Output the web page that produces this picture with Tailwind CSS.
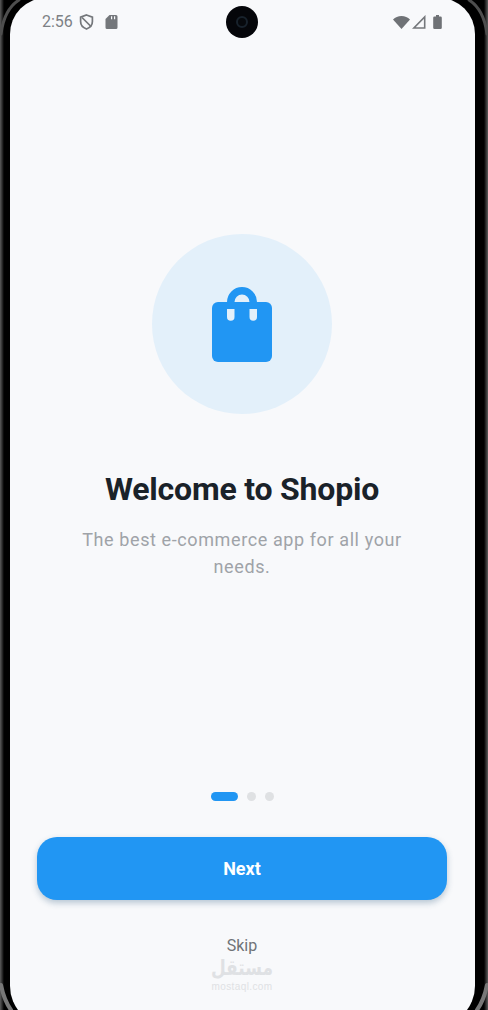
<!DOCTYPE html>
<html lang="en">
<head>
<meta charset="utf-8">
<title>Shopio</title>
<script src="https://cdn.jsdelivr.net/npm/@tailwindcss/browser@4"></script>
</head>
<body class="m-0 h-[1010px] w-[488px] overflow-hidden bg-black font-['Roboto',sans-serif]">
<div class="relative flex h-[1010px] w-[488px] overflow-hidden bg-[linear-gradient(to_right,#5c5c5c_0px,#303030_2px,#000_4px,#000_484px,#303030_486px,#5c5c5c_488px)] pl-[10px]">
  <svg class="absolute top-0 left-0" width="488" height="1010" viewBox="0 0 488 1010" fill="none" stroke-linecap="round">
    <path d="M1 34 C3 18 8 7 19 0" stroke="#4e4e4e" stroke-width="3"/>
    <path d="M487 34 C485 18 480 7 469 0" stroke="#4e4e4e" stroke-width="3"/>
    <path d="M1 985 C3 995 6 1003 11 1010" stroke="#777" stroke-width="4"/>
    <path d="M487 985 C485 995 482 1003 477 1010" stroke="#777" stroke-width="4"/>
  </svg>
  <main class="relative mt-[-2px] flex h-[1028px] w-[465px] shrink-0 flex-col items-center rounded-t-[36px] rounded-b-[40px] bg-[#f8f9fb] pr-[1px]">
    <header class="flex h-[48px] w-full items-center px-[32px]">
      <div class="flex flex-1 items-center text-[#7d8185]">
        <span class="text-[16px] leading-[20px]">2:56</span>
        <svg class="ml-[6px]" width="15" height="16" viewBox="0 0 15 16" fill="none" stroke="#74777b" stroke-width="1.7"><path d="M7.5 1 L13.4 3.1 V7.6 C13.4 11 11 13.8 7.5 15 C4 13.8 1.6 11 1.6 7.6 V3.1 Z"/><path d="M3 3.5 L12 12.5"/></svg>
        <svg class="ml-[11px]" width="13" height="14" viewBox="0 0 13 14" fill="#74777b"><path d="M4.5 0 H11 A1.5 1.5 0 0 1 12.5 1.5 V12.5 A1.5 1.5 0 0 1 11 14 H2 A1.5 1.5 0 0 1 .5 12.5 V4 Z"/><path d="M6 1.2h1.2v3H6zM9 1.2h1.2v3H9z" fill="#f8f9fb"/></svg>
      </div>
      <div class="flex size-[32px] shrink-0 items-center justify-center rounded-full bg-[#05060a]">
        <div class="size-[12px] rounded-full border-2 border-[#18222c] bg-[#06080c]"></div>
      </div>
      <div class="flex flex-1 items-center justify-end">
        <svg width="17" height="13" viewBox="0 0 17 13" fill="#6f7276"><path d="M8.5 13 L0 3.6 C2.2 1.4 5.2 0 8.5 0 C11.8 0 14.8 1.4 17 3.6 Z"/></svg>
        <svg class="ml-[2px]" width="14" height="14" viewBox="0 0 14 14" fill="none" stroke="#75787c" stroke-width="1.6"><path d="M12.7 1.9 V13 H1.9 Z"/></svg>
        <svg class="ml-[7px]" width="9" height="14" viewBox="0 0 9 14" fill="#6f7276"><path d="M3 0 H6 V1.4 H7.5 A1.3 1.3 0 0 1 8.8 2.7 V12.7 A1.3 1.3 0 0 1 7.5 14 H1.5 A1.3 1.3 0 0 1 .2 12.7 V2.7 A1.3 1.3 0 0 1 1.5 1.4 H3 Z"/></svg>
      </div>
    </header>

    <div class="mt-[188px] flex size-[180px] items-center justify-center rounded-full bg-[#e3f0fa]">
      <svg width="60" height="75" viewBox="0 0 60 75">
        <path d="M18.75 18 V15 A11.25 11.25 0 0 1 41.25 15 V18" fill="none" stroke="#2196f3" stroke-width="7.5"/>
        <path d="M6 15 H54 A6 6 0 0 1 60 21 V69 A6 6 0 0 1 54 75 H6 A6 6 0 0 1 0 69 V21 A6 6 0 0 1 6 15 Z" fill="#2196f3"/>
        <path d="M15 22 H22.5 V30 A3.75 3.75 0 0 1 15 30 Z M37.5 22 H45 V30 A3.75 3.75 0 0 1 37.5 30 Z" fill="#e3f0fa"/>
      </svg>
    </div>

    <h1 class="mt-[55px] text-[32px] leading-[40px] font-bold tracking-[-0.2px] text-[#1a2229]">Welcome to Shopio</h1>
    <p class="mt-[17px] w-[340px] text-center text-[18px] leading-[27px] tracking-[0.6px] text-[#9fa3a8]">The best e-commerce app for all your needs.</p>

    <div class="mt-[212px] flex items-center gap-[9px]">
      <span class="h-[9px] w-[27px] rounded-full bg-[#2196f3]"></span>
      <span class="size-[9px] rounded-full bg-[#dfe1e3]"></span>
      <span class="size-[9px] rounded-full bg-[#dfe1e3]"></span>
    </div>

    <button class="mt-[36px] h-[63px] w-[410px] rounded-[20px] bg-[#2196f3] text-[18px] font-bold text-white shadow-[0_3px_6px_rgba(33,80,120,0.3)]">Next</button>

    <span class="mt-[37px] text-[16px] leading-[18px] text-[#6f7377]">Skip</span>
    <div class="mt-[5px] flex flex-col items-center text-[#dfe1e4]">
      <span class="origin-bottom scale-y-125 font-['DejaVu_Sans',sans-serif] text-[17px] leading-[20px] font-bold" dir="rtl">مستقل</span>
      <span class="mt-[2px] font-['Liberation_Sans',sans-serif] text-[10px] leading-[10px] tracking-[0.4px]">mostaql.com</span>
    </div>
  </main>
</div>
</body>
</html>
